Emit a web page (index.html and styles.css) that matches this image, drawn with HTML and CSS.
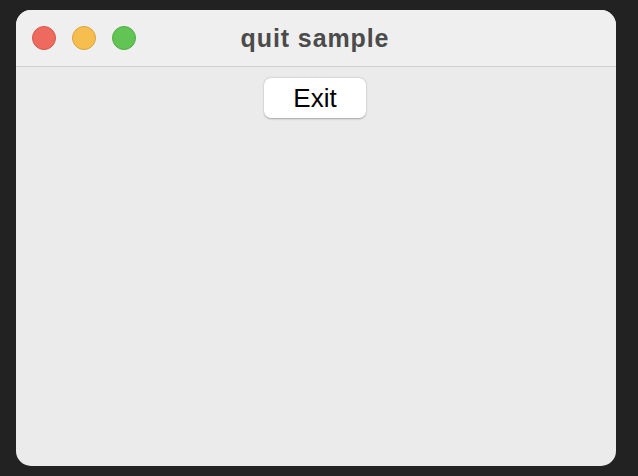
FILE: index.html
```html
<!DOCTYPE html>
<html lang="en">

<head>
    <meta charset="UTF-8">
    <title>quit sample</title>
    <link rel="stylesheet" href="styles.css">
</head>

<body>
    <div class="window">
        <div class="titlebar">
            <div class="lights">
                <span class="light close"></span>
                <span class="light minimize"></span>
                <span class="light zoom"></span>
            </div>
            <div class="title">quit sample</div>
        </div>
        <div class="content">
            <button class="exit-btn">Exit</button>
        </div>
    </div>
</body>

</html>
```
FILE: styles.css
```css
body {
    margin: 0;
    padding: 10px 16px;
    background-color: #222222;
    font-family: "Liberation Sans", Arial, sans-serif;
}

.window {
    width: 600px;
    height: 456px;
    background-color: #ebebeb;
    border-radius: 15px;
    overflow: hidden;
}

.titlebar {
    position: relative;
    height: 56px;
    padding-right: 2px;
    background-color: #efefef;
    border-bottom: 1px solid #d0d0d0;
    display: flex;
    align-items: center;
    justify-content: center;
}

.lights {
    position: absolute;
    left: 16px;
    top: 16px;
    display: flex;
    gap: 16px;
}

.light {
    width: 22px;
    height: 22px;
    border-radius: 50%;
    border: 1px solid transparent;
}

.close {
    background-color: #ee6a5f;
    border-color: #d5574d;
}

.minimize {
    background-color: #f6be4f;
    border-color: #dca23a;
}

.zoom {
    background-color: #61c454;
    border-color: #4fae43;
}

.title {
    font-size: 25px;
    font-weight: bold;
    color: #4b4b4b;
    letter-spacing: 0.9px;
    margin-top: 1px;
}

.content {
    display: flex;
    justify-content: center;
    padding-top: 11px;
    padding-right: 2px;
}

.exit-btn {
    width: 102px;
    height: 40px;
    background-color: #fff;
    border: none;
    border-radius: 7px;
    box-shadow: 0 0.5px 2px rgba(0, 0, 0, 0.3);
    font-family: "Liberation Sans", Arial, sans-serif;
    font-size: 26px;
    color: #000;
    padding: 0;
}
```
